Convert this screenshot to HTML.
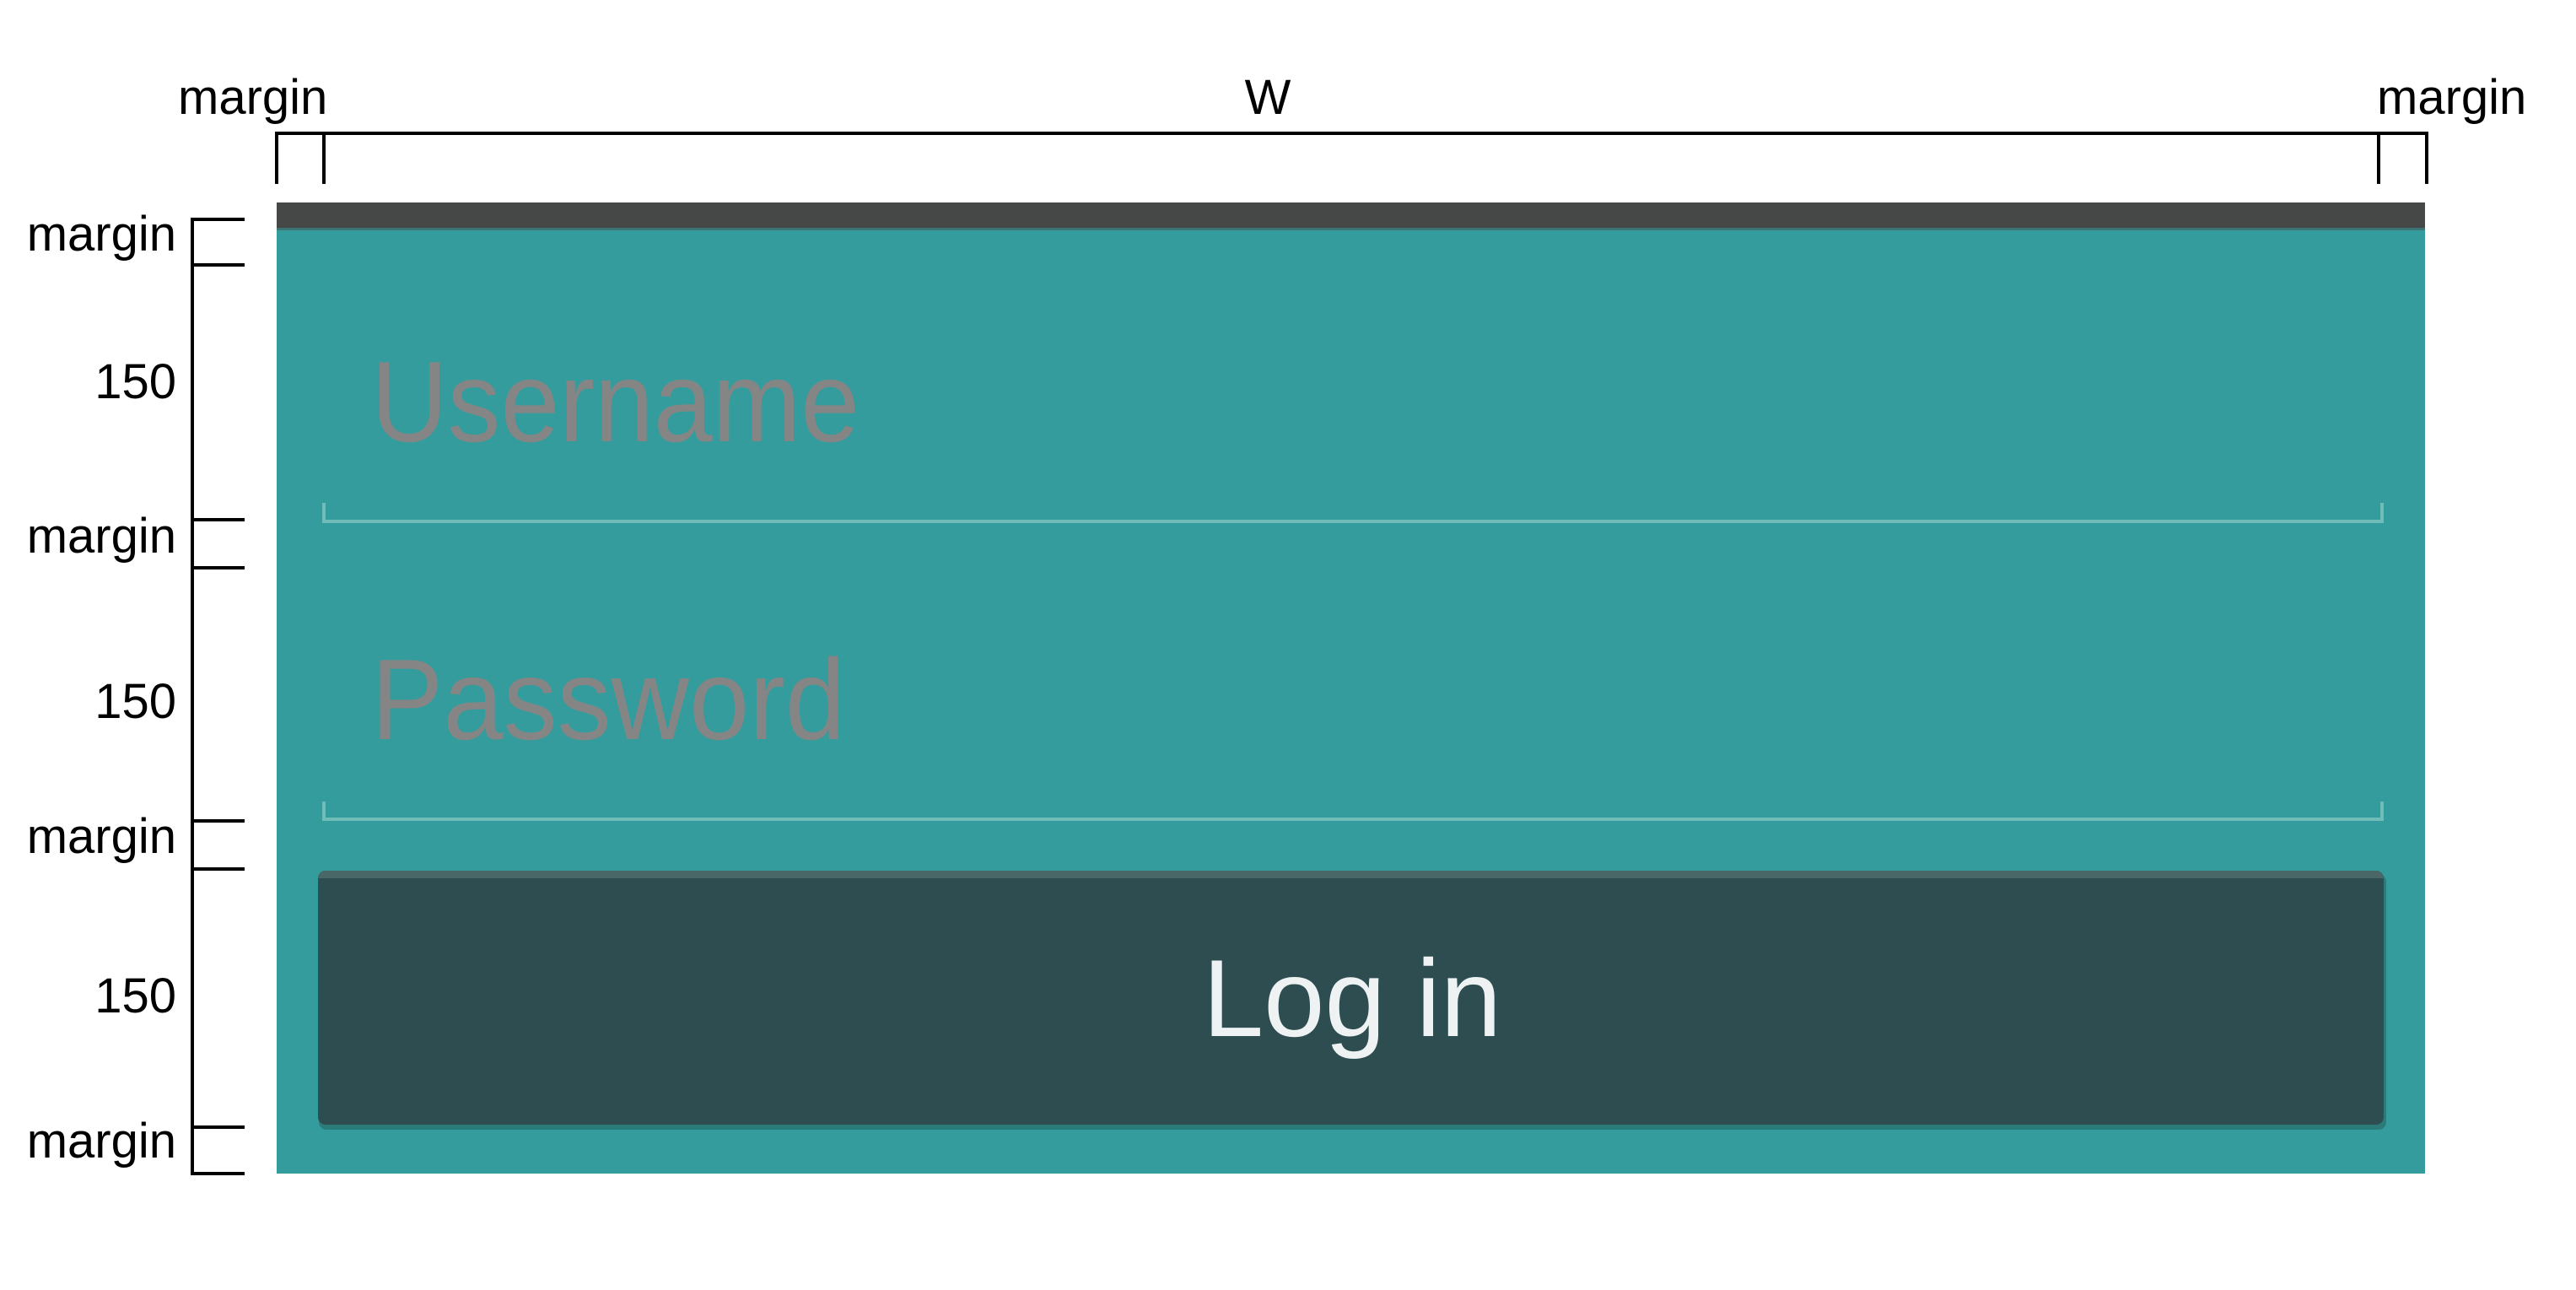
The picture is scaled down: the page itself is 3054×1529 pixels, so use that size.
<!DOCTYPE html>
<html><head><meta charset="utf-8"><style>
html,body{margin:0;padding:0;background:#fff;}
svg{display:block;}
</style></head><body>
<svg width="3054" height="1529" viewBox="0 0 3054 1529" xmlns="http://www.w3.org/2000/svg">
<rect width="3054" height="1529" fill="#fff"/>
<g font-family="Liberation Sans, DejaVu Sans, sans-serif" font-size="58" fill="#000">
<text x="211" y="135">margin</text>
<text x="1503" y="135" text-anchor="middle">W</text>
<text x="2818" y="135">margin</text>
<text x="209" y="297" text-anchor="end">margin</text>
<text x="209" y="472" text-anchor="end">150</text>
<text x="209" y="655" text-anchor="end">margin</text>
<text x="209" y="851" text-anchor="end">150</text>
<text x="209" y="1011" text-anchor="end">margin</text>
<text x="209" y="1200" text-anchor="end">150</text>
<text x="209" y="1372" text-anchor="end">margin</text>
</g>
<g stroke="#000" stroke-width="4" fill="none">
<path d="M328 218 V158 H2877 V218"/>
<path d="M384 158 V218 M2820 158 V218"/>
<path d="M290 260 H228 V1391 H290"/>
<path d="M228 314 H290 M228 616 H290 M228 673 H290 M228 973 H290 M228 1030 H290 M228 1336 H290"/>
</g>
<rect x="328" y="240" width="2547" height="1151" fill="#349c9c"/>
<rect x="328" y="240" width="2547" height="32" fill="#464747"/>
<rect x="328" y="270" width="2547" height="3" fill="#3d7474"/>
<g font-family="Liberation Sans, DejaVu Sans, sans-serif" font-size="136" fill="#858585">
<text x="440" y="523" textLength="579" lengthAdjust="spacingAndGlyphs">Username</text>
<text x="440" y="876" textLength="562" lengthAdjust="spacingAndGlyphs">Password</text>
</g>
<g stroke="#6fbcb8" stroke-width="4" fill="none">
<path d="M384 596 V618 H2824 V596"/>
<path d="M384 950 V971 H2824 V950"/>
</g>
<rect x="378" y="1036" width="2451" height="303" rx="9" fill="#2a6e6e" opacity="0.7"/>
<rect x="377" y="1032" width="2449" height="301" rx="9" fill="#2d4d50"/>
<path d="M386 1032 H2817 A9 9 0 0 1 2826 1041 H377 A9 9 0 0 1 386 1032 Z" fill="#4a6767"/>
<text x="1603" y="1228" text-anchor="middle" font-family="Liberation Sans, DejaVu Sans, sans-serif" font-size="130" fill="#eef2f2">Log in</text>
</svg>
</body></html>
